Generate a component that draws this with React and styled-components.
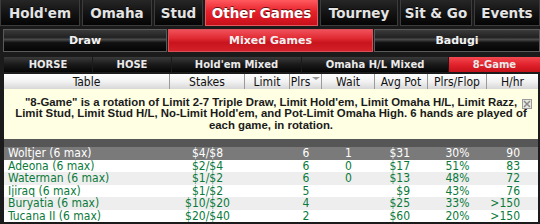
import React from "react";
import styled, { createGlobalStyle } from "styled-components";

const Global = createGlobalStyle`
  html, body { margin: 0; padding: 0; background: #1b1b1b; }
  * { box-sizing: border-box; }
`;

const Page = styled.div`
  width: 540px;
  height: 224px;
  overflow: hidden;
  background: #1b1b1b;
  display: flex;
  flex-direction: column;
`;

const TopBar = styled.div`
  display: flex;
  gap: 2px;
  height: 26px;
`;

const TopTab = styled.div`
  flex: 0 0 ${(p) => p.$w}px;
  display: flex;
  align-items: center;
  justify-content: center;
  font-family: "DejaVu Sans", sans-serif;
  font-weight: bold;
  font-size: 13.5px;
  color: ${(p) => (p.$active ? "#fff" : "#e4e4e4")};
  text-shadow: 0 -1px 0 rgba(0, 0, 0, 0.6);
  border: 1px solid ${(p) => (p.$active ? "#e05a60" : "#3c3c3c")};
  border-top: none;
  background: ${(p) =>
    p.$active
      ? "linear-gradient(#ff5a5f 0%, #e8222b 45%, #c8101a 100%)"
      : "linear-gradient(#262626 0%, #141414 50%, #050505 100%)"};
`;

const SubBar = styled.div`
  display: flex;
  margin-top: 3px;
  padding-left: 3px;
  height: 23px;
  gap: 1px;
`;

const SubTab = styled.div`
  flex: 0 0 ${(p) => p.$w}px;
  display: flex;
  align-items: center;
  justify-content: center;
  font-family: "DejaVu Sans", sans-serif;
  font-weight: bold;
  font-size: 11px;
  color: #f2f2f2;
  border: 1px solid ${(p) => (p.$active ? "#d85058" : "#5a5a5a")};
  background: ${(p) =>
    p.$active
      ? "linear-gradient(#f0505a 0%, #e02a32 40%, #c8141c 60%, #d42028 100%)"
      : "linear-gradient(#3a3a3a 0%, #222 35%, #4a4a4a 45%, #111 60%, #050505 100%)"};
`;

const GameBar = styled.div`
  display: flex;
  margin-top: 5px;
  padding-left: 4px;
  height: 15px;
  gap: 1px;
`;

const GameTab = styled.div`
  flex: 0 0 ${(p) => p.$w}px;
  display: flex;
  align-items: center;
  justify-content: center;
  font-family: "DejaVu Sans", sans-serif;
  font-weight: bold;
  font-size: 10px;
  color: #eaeaea;
  background: ${(p) =>
    p.$active
      ? "linear-gradient(#f44850 0%, #e0202a 55%, #c4121a 100%)"
      : "linear-gradient(#3a3a3a 0%, #1a1a1a 50%, #050505 100%)"};
`;

const Body = styled.div`
  margin: 2px 2px 0 4px;
  display: flex;
  flex-direction: column;
  flex: 1;
`;

const cols = [166, 75, 45, 32, 53, 53, 59, 51];

const HeaderRow = styled.div`
  display: flex;
  height: 15px;
`;

const HeadCell = styled.div`
  flex: 0 0 ${(p) => p.$w}px;
  display: flex;
  align-items: center;
  justify-content: center;
  font-family: "Liberation Sans Narrow", "DejaVu Sans Condensed", "Liberation Sans", sans-serif;
  font-size: 12px;
  line-height: 12px;
  color: #111;
  border-right: 1px solid #9a9a9a;
  background: linear-gradient(#ffffff 0%, #f2f2f2 50%, #d8d8d8 100%);
  &:last-child { border-right: none; }
`;

const SortMark = styled.span`
  display: inline-block;
  margin-left: 2px;
  margin-top: -6px;
  width: 0;
  height: 0;
  border-left: 4px solid transparent;
  border-right: 4px solid transparent;
  border-top: 3px solid #999;
`;

const Info = styled.div`
  height: 50px;
  background: #ffffe3;
  position: relative;
  display: flex;
  align-items: center;
  justify-content: center;
  padding: 0 4px 0 4px;
  text-align: center;
  font-family: "Liberation Sans", sans-serif;
  font-weight: bold;
  font-size: 11.4px;
  line-height: 11.5px;
  color: #1a1a1a;
  white-space: nowrap;
`;

const Close = styled.div`
  position: absolute;
  right: 6px;
  top: 10px;
  width: 10px;
  height: 10px;
  border: 1px solid #9a9a9a;
  background: #e8e8e0;
  display: flex;
  align-items: center;
  justify-content: center;
`;

const Divider = styled.div`
  height: 8px;
  background: #565656;
`;

const Row = styled.div`
  display: flex;
  height: 12.5px;
  background: ${(p) => (p.$selected ? "#7a7a7a" : p.$alt ? "#eeeeee" : "#ffffff")};
  color: ${(p) => (p.$selected ? "#ffffff" : "#0a7a3a")};
`;

const Cell = styled.div`
  flex: 0 0 ${(p) => p.$w}px;
  display: flex;
  align-items: center;
  justify-content: ${(p) => p.$align || "center"};
  padding: ${(p) => (p.$align === "flex-start" ? "0 0 0 4px" : p.$align === "flex-end" ? "0 18px 0 0" : "0")};
  font-family: "Liberation Sans Narrow", "DejaVu Sans Condensed", "Liberation Sans", sans-serif;
  font-size: 12px;
  line-height: 12px;
  white-space: nowrap;
  overflow: hidden;
`;

const rows = [
  ["Woltjer (6 max)", "$4/$8", "", "6", "1", "$31", "30%", "90"],
  ["Adeona (6 max)", "$2/$4", "", "6", "0", "$17", "51%", "83"],
  ["Waterman (6 max)", "$1/$2", "", "6", "0", "$13", "48%", "72"],
  ["Ijiraq (6 max)", "$1/$2", "", "5", "", "$9", "43%", "76"],
  ["Buryatia (6 max)", "$10/$20", "", "4", "", "$25", "33%", ">150"],
  ["Tucana II (6 max)", "$20/$40", "", "2", "", "$60", "20%", ">150"],
];

const aligns = ["flex-start", "center", "center", "center", "center", "flex-end", "center", "flex-end"];

export default function App() {
  return (
    <Page>
      <Global />
      <TopBar>
        <TopTab $w={80}>Hold'em</TopTab>
        <TopTab $w={70}>Omaha</TopTab>
        <TopTab $w={49}>Stud</TopTab>
        <TopTab $w={113} $active>Other Games</TopTab>
        <TopTab $w={78}>Tourney</TopTab>
        <TopTab $w={72}>Sit &amp; Go</TopTab>
        <TopTab $w={66}>Events</TopTab>
      </TopBar>
      <SubBar>
        <SubTab $w={164}>Draw</SubTab>
        <SubTab $w={205} $active>Mixed Games</SubTab>
        <SubTab $w={166}>Badugi</SubTab>
      </SubBar>
      <GameBar>
        <GameTab $w={88}>HORSE</GameTab>
        <GameTab $w={78}>HOSE</GameTab>
        <GameTab $w={129}>Hold'em Mixed</GameTab>
        <GameTab $w={146}>Omaha H/L Mixed</GameTab>
        <GameTab $w={91} $active>8-Game</GameTab>
      </GameBar>
      <Body>
        <HeaderRow>
          {["Table", "Stakes", "Limit", "Plrs", "Wait", "Avg Pot", "Plrs/Flop", "H/hr"].map((h, i) => (
            <HeadCell key={h} $w={cols[i]}>
              {h}
              {h === "Plrs" && <SortMark />}
            </HeadCell>
          ))}
        </HeaderRow>
        <Info>
          <div>
            "8-Game" is a rotation of Limit 2-7 Triple Draw, Limit Hold'em, Limit Omaha H/L, Limit Razz,
            <br />
            Limit Stud, Limit Stud H/L, No-Limit Hold'em, and Pot-Limit Omaha High. 6 hands are played of
            <br />
            each game, in rotation.
          </div>
          <Close>
            <svg width="8" height="8" viewBox="0 0 8 8">
              <path d="M1 1L7 7M7 1L1 7" stroke="#8a8a8a" strokeWidth="1.5" />
            </svg>
          </Close>
        </Info>
        <Divider />
        {rows.map((r, i) => (
          <Row key={i} $selected={i === 0} $alt={i % 2 === 0}>
            {r.map((c, j) => (
              <Cell key={j} $w={cols[j]} $align={aligns[j]}>
                {c}
              </Cell>
            ))}
          </Row>
        ))}
      </Body>
    </Page>
  );
}
